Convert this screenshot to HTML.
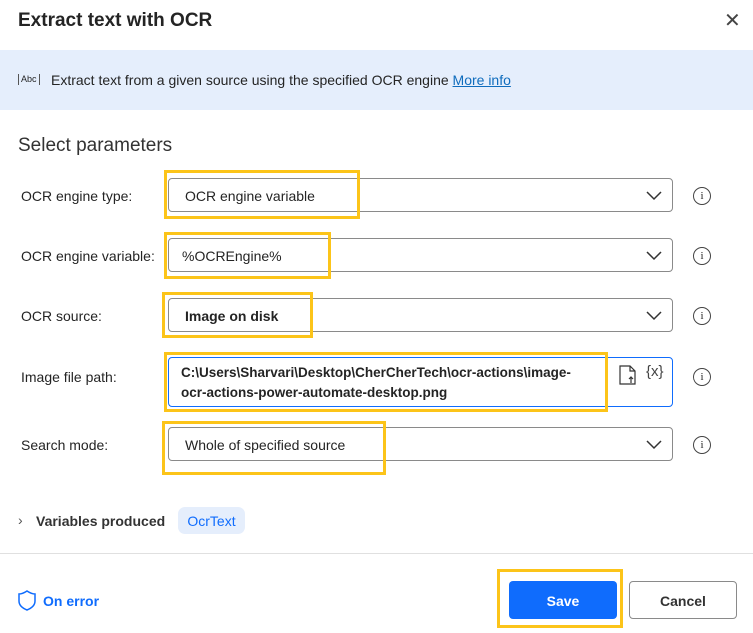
<!DOCTYPE html>
<html><head><style>
body{margin:0;width:753px;height:633px;background:#fff;font-family:"Liberation Sans",sans-serif;color:#242424;position:relative;overflow:hidden}
.a{position:absolute}
.lbl{position:absolute;left:21px;font-size:14px;color:#242424}
.fld{position:absolute;left:168px;width:505px;height:34px;border:1px solid #8a8a8a;border-radius:4px;box-sizing:border-box;font-size:14px;padding-left:16px;line-height:34px}
.chev{position:absolute;right:10px;top:12px}
.info{position:absolute;left:693px;width:16px;height:16px;border:1.3px solid #444;border-radius:50%;font-size:11px;text-align:center;line-height:16px;font-family:"Liberation Serif",serif}
.y{position:absolute;border:3px solid #fcc419;box-sizing:border-box}
</style></head><body>
<div class="a" style="left:18px;top:10px;font-size:19px;font-weight:bold">Extract text with OCR</div>
<div class="a" style="left:724px;top:8px;font-size:20px;color:#444">✕</div>
<div class="a" style="left:0;top:50px;width:753px;height:60px;background:#e5eefc"></div>
<div class="a" style="left:18px;top:74px;font-size:9px;border:1px solid #555;border-top:none;border-bottom:none;padding:0 2px;line-height:11px">Abc</div>
<div class="a" style="left:51px;top:72px;font-size:14px">Extract text from a given source using the specified OCR engine <span style="color:#0f6cbd;text-decoration:underline">More info</span></div>
<div class="a" style="left:18px;top:135px;font-size:19px;color:#333">Select parameters</div>

<div class="lbl" style="top:188px">OCR engine type:</div>
<div class="fld" style="top:178px">OCR engine variable<svg class="chev" width="16" height="10"><path d="M1 1l7 7 7-7" fill="none" stroke="#333" stroke-width="1.5"/></svg></div>
<div class="info" style="top:187px">i</div>
<div class="lbl" style="top:248px">OCR engine variable:</div>
<div class="fld" style="top:238px;padding-left:13px">%OCREngine%<svg class="chev" width="16" height="10"><path d="M1 1l7 7 7-7" fill="none" stroke="#333" stroke-width="1.5"/></svg></div>
<div class="info" style="top:247px">i</div>
<div class="lbl" style="top:308px">OCR source:</div>
<div class="fld" style="top:298px;font-weight:bold">Image on disk<svg class="chev" width="16" height="10"><path d="M1 1l7 7 7-7" fill="none" stroke="#333" stroke-width="1.5"/></svg></div>
<div class="info" style="top:307px">i</div>
<div class="lbl" style="top:369px">Image file path:</div>
<div class="fld" style="top:357px;height:50px;border-color:#0f6cfd;padding:5px 0 0 12px;line-height:20px;font-weight:bold;font-size:13.5px">C:\Users\Sharvari\Desktop\CherCherTech\ocr-actions\image-<br>ocr-actions-power-automate-desktop.png</div>
<svg class="a" style="left:619px;top:365px" width="18" height="20"><path d="M1 1h10l5 5v13H1z M11 1v5h5 M12 18v-6 M10 14l2-2 2 2" fill="none" stroke="#333" stroke-width="1.2"/></svg>
<div class="a" style="left:646px;top:363px;font-size:15px;color:#444">{x}</div>
<div class="info" style="top:368px">i</div>
<div class="lbl" style="top:437px">Search mode:</div>
<div class="fld" style="top:427px">Whole of specified source<svg class="chev" width="16" height="10"><path d="M1 1l7 7 7-7" fill="none" stroke="#333" stroke-width="1.5"/></svg></div>
<div class="info" style="top:436px">i</div>

<div class="y" style="left:164px;top:170px;width:196px;height:49px"></div>
<div class="y" style="left:164px;top:232px;width:167px;height:47px"></div>
<div class="y" style="left:162px;top:292px;width:151px;height:46px"></div>
<div class="y" style="left:164px;top:352px;width:444px;height:60px"></div>
<div class="y" style="left:162px;top:421px;width:224px;height:54px"></div>

<div class="a" style="left:18px;top:512px;font-size:14px;color:#555">›</div>
<div class="a" style="left:36px;top:513px;font-size:14px;font-weight:bold;color:#333">Variables produced</div>
<div class="a" style="left:178px;top:507px;width:67px;height:27px;background:#e5eefc;border-radius:7px;color:#0f6cfd;font-size:14px;text-align:center;line-height:28px">OcrText</div>
<div class="a" style="left:0;top:553px;width:753px;height:1px;background:#e0e0e0"></div>
<svg class="a" style="left:18px;top:590px" width="18" height="21"><path d="M9 1C6 3 4 4 1 4v7c0 4 3 7 8 9 5-2 8-5 8-9V4c-3 0-5-1-8-3z" fill="none" stroke="#0f6cfd" stroke-width="1.5"/></svg>
<div class="a" style="left:43px;top:593px;font-size:14px;font-weight:bold;color:#0f6cfd">On error</div>
<div class="a" style="left:509px;top:581px;width:108px;height:38px;background:#0f6cfd;border-radius:4px;color:#fff;font-weight:bold;font-size:14px;text-align:center;line-height:40px">Save</div>
<div class="y" style="left:497px;top:569px;width:126px;height:59px"></div>
<div class="a" style="left:629px;top:581px;width:108px;height:38px;border:1px solid #8a8a8a;box-sizing:border-box;border-radius:4px;font-size:14px;text-align:center;line-height:38px;font-weight:bold;color:#333">Cancel</div>
</body></html>
